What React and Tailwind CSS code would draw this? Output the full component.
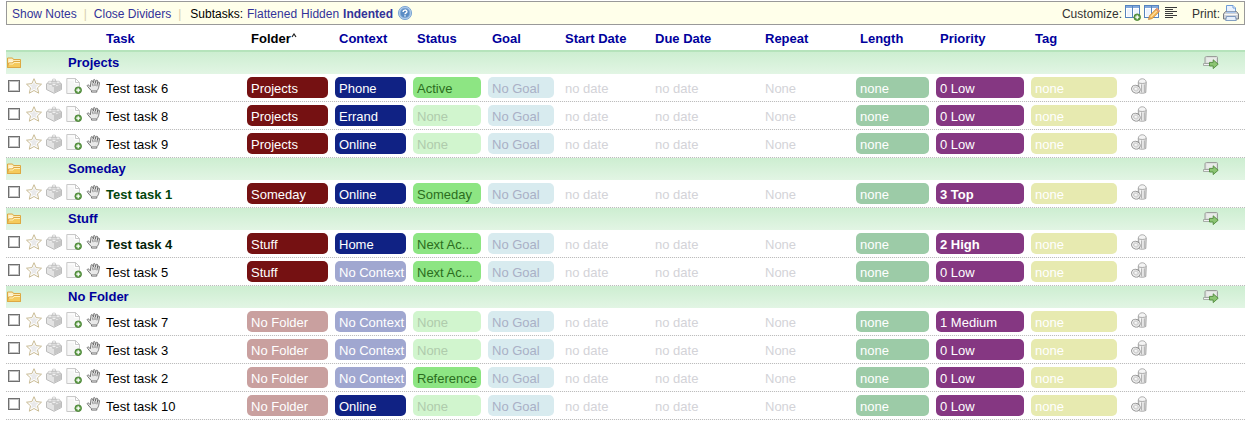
const groups = [
  {
    name: "Projects",
    tasks: [
      { title: "Test task 6", folder: "Projects", context: "Phone", status: "Active", priority: "0 Low" },
      { title: "Test task 8", folder: "Projects", context: "Errand", status: "None", priority: "0 Low" },
      { title: "Test task 9", folder: "Projects", context: "Online", status: "None", priority: "0 Low" },
    ],
  },
  {
    name: "Someday",
    tasks: [
      { title: "Test task 1", tone: "font-bold text-[#00450c]", folder: "Someday", context: "Online", status: "Someday", priority: "3 Top", high: true },
    ],
  },
  {
    name: "Stuff",
    tasks: [
      { title: "Test task 4", tone: "font-bold text-[#002208]", folder: "Stuff", context: "Home", status: "Next Ac...", priority: "2 High", high: true },
      { title: "Test task 5", folder: "Stuff", context: "No Context", status: "Next Ac...", priority: "0 Low" },
    ],
  },
  {
    name: "No Folder",
    tasks: [
      { title: "Test task 7", folder: "No Folder", context: "No Context", status: "None", priority: "1 Medium" },
      { title: "Test task 3", folder: "No Folder", context: "No Context", status: "None", priority: "0 Low" },
      { title: "Test task 2", folder: "No Folder", context: "No Context", status: "Reference", priority: "0 Low" },
      { title: "Test task 10", folder: "No Folder", context: "Online", status: "None", priority: "0 Low" },
    ],
  },
];

function Icon({ children }) {
  return (
    <svg viewBox="0 0 16 16" className="block size-4 shrink-0" fill="none" aria-hidden="true">
      {children}
    </svg>
  );
}

function PlusBadge() {
  return (
    <>
      <circle cx="12.2" cy="12.2" r="3.3" fill="#5f9c48" stroke="#44802f" strokeWidth=".8" />
      <path d="M12.2 10.2v4M10.2 12.2h4" stroke="#fff" strokeWidth="1.3" />
    </>
  );
}

function HelpIcon() {
  return (
    <Icon>
      <circle cx="8" cy="8" r="6.600" fill="#b4cfec" stroke="#7fa8d4" />
      <circle cx="8" cy="8" r="4.900" fill="#5a8cc4" stroke="#8db3dc" strokeWidth=".8" />
      <path d="M6.100 6.900c0-2.400 3.800-2.400 3.800-.2C9.900 8 8 7.900 8 9.300M8 10.200v1.400" stroke="#fff" strokeWidth="1.400" />
    </Icon>
  );
}

function ColumnsGlyph() {
  return (
    <>
      <rect x=".5" y=".5" width="14" height="12" fill="#fff" stroke="#5583bd" />
      <path d="M1 2h13" stroke="#82a9dc" strokeWidth="2" />
      <path d="M7.500 1v11" stroke="#5583bd" />
      <path d="M2 4h4.500v7.500H2zM9 4h4.500v7.500H9z" fill="#eef4fc" />
    </>
  );
}

function ColumnsAddIcon() {
  return (
    <Icon>
      <ColumnsGlyph />
      <PlusBadge />
    </Icon>
  );
}

function ColumnsEditIcon() {
  return (
    <Icon>
      <ColumnsGlyph />
      <path d="M4.500 14.500l1-3.800 6.800-6.800 2.800 2.800-6.800 6.800z" fill="#f5b653" stroke="#cc842c" strokeWidth=".8" />
      <path d="M6.800 11.800l6-6" stroke="#fde4a6" strokeWidth="1.200" />
      <path d="M11.800 4.200l1.200-1.200 2.700 2.700-1.200 1.200z" fill="#ea9f80" stroke="#c97857" strokeWidth=".5" />
      <path d="M4.500 14.500l.5-1.900 1.400 1.400z" fill="#c9a878" />
    </Icon>
  );
}

function LinesIcon() {
  return (
    <Icon>
      <path d="M2 2.500h12M2 4.500h8M2 6.500h12M2 8.500h8M2 10.500h12M2 12.500h8" stroke="#3a3a3a" />
    </Icon>
  );
}

function PrinterIcon() {
  return (
    <Icon>
      <path d="M3.500 7.500v-7h6.500l2.500 2.500v4.500z" fill="#eaf2fd" stroke="#6f9cd6" />
      <path d="M10 .5v2.500h2.500" fill="#fff" stroke="#6f9cd6" />
      <path d="M2.500 6.500h11l2 2.500v5H.5V9z" fill="#cfd2d6" stroke="#777b82" />
      <path d="M3.500 6.500h9v1.500h-9z" fill="#a8c6ee" />
      <path d="M1.500 9.500h13" stroke="#f7f7f7" />
      <path d="M3.500 11.500h9l.8 4H2.700z" fill="#e6effb" stroke="#6586b5" strokeWidth=".8" />
    </Icon>
  );
}

function FolderIcon() {
  return (
    <Icon>
      <path d="M1.500 12.500v-9.500h5l1 1.500h7v8z" fill="#fbeab7" stroke="#dda843" />
      <path d="M3 5h3.500M3 6.500h10.500" stroke="#fff8dd" />
      <path d="M1.500 12.500l1-4.500h4l1-1.500h7v6z" fill="#f5cb5d" stroke="#dda843" />
      <path d="M3.300 9h3.700l1-1.500h6" stroke="#fff0bd" />
    </Icon>
  );
}

function SendIcon() {
  return (
    <Icon>
      <path d="M2 8.500V3c0-.8.500-1.500 1.500-1.500h10c.7 0 1 .5 1 1v6z" fill="#dcdfdc" stroke="#9a9d9a" />
      <path d="M3.500 3h9.500v4H3.500z" fill="#e9ebe9" />
      <path d="M.5 8.500h8v2h-8z" fill="#f2f3f2" stroke="#989c98" strokeWidth=".8" />
      <path d="M6.500 7.400h3.700V4.800l5 4.400-5 4.400V11H6.500z" fill="#8cc573" stroke="#4f8a3b" strokeWidth=".9" />
    </Icon>
  );
}

function StarIcon() {
  return (
    <Icon>
      <path d="M8 .7l2.100 4.900 5.400.6-4 3.600 1.200 5.400L8 12.500 3.300 15.200l1.200-5.400-4-3.600 5.400-.6z" fill="#fff" stroke="#c9bb95" strokeLinejoin="round" />
      <path d="M8 3.500l1.300 3 3.300.4-2.500 2.200.8 3.300L8 10.900l-2.900 1.500.8-3.300-2.500-2.200 3.300-.4z" fill="#e9e9ea" />
    </Icon>
  );
}

function BrickIcon() {
  return (
    <Icon>
      <path d="M.5 5.800L8 2.800l7.500 3v5.700L8 15.300.5 11.500z" fill="#e3e3e3" stroke="#b4b4b4" strokeWidth=".9" strokeLinejoin="round" />
      <path d="M1 5.900L8 3.100l7 2.800-7 3.300z" fill="#f5f5f5" />
      <path d="M8 9.300v5.500l7.100-3.600V6z" fill="#c6c6c6" />
      <g stroke="#b2b2b2" strokeWidth=".6">
        <path d="M6.200 2v1.300c0 1 3.600 1 3.600 0V2M2 4.200v1.500c0 1.100 4 1.100 4 0V4.200M10 4.200v1.500c0 1.100 4 1.100 4 0V4.200M6 6.300v1.500c0 1.100 4 1.100 4 0V6.300" fill="#dadada" />
        <g fill="#fff">
          <ellipse cx="8" cy="2" rx="1.800" ry="1" />
          <ellipse cx="4" cy="4.200" rx="2" ry="1" />
          <ellipse cx="12" cy="4.200" rx="2" ry="1" />
          <ellipse cx="8" cy="6.300" rx="2" ry="1" />
        </g>
      </g>
    </Icon>
  );
}

function NoteAddIcon() {
  return (
    <Icon>
      <path d="M.8.5h8.700l4 4v11H.8z" fill="#f6f6f6" stroke="#c9c9c9" />
      <path d="M2 2h6.500v3.500H12.500" stroke="#fff" />
      <path d="M9.500.5v4h4z" fill="#fff" stroke="#c9c9c9" strokeLinejoin="round" />
      <PlusBadge />
    </Icon>
  );
}

function HandIcon() {
  return (
    <Icon>
      <path d="M4.300 8.800L3 7.300c-1-.9-2.300 0-1.500 1L3.800 11l1.700 1.800v1.300h5.300v-1.300c1.300-1.300 1.900-2.800 2.100-4.600l.6-3.300c0-1.200-1.400-1.200-1.600-.2l-.5 1.400.3-3c0-1.200-1.600-1.200-1.800-.1l-.4 1.900-.4-2.600c-.2-1.100-1.800-1-1.700.2l.1 2.600-.9-2c-.5-1-1.900-.5-1.600.6z" fill="#e9e9e9" stroke="#696969" strokeWidth=".9" strokeLinejoin="round" />
      <path d="M6.600 5.500l.5 2.700M9 5v3M11.300 5.800l-.4 2.500" stroke="#666" strokeWidth=".8" />
      <path d="M5.800 12.600h5" stroke="#999" strokeWidth=".8" />
    </Icon>
  );
}

function TrashIcon() {
  return (
    <Icon>
      <path d="M7.300 4.500l.2 10c1.500.9 5.600.9 7.300 0l.4-10z" fill="#e0e0e0" stroke="#9c9c9c" strokeWidth=".9" />
      <path d="M9.300 6v8.500M12 6v8.500" stroke="#fafafa" />
      <path d="M10.600 6.500v7.500M13.300 6.500v7.500" stroke="#a9a9a9" strokeWidth=".9" />
      <path d="M7.200 4.500C7.500-.5 15-.5 15.300 4.500c-1.500 1.300-6.600 1.300-8.100 0z" fill="#f4f4f4" stroke="#9c9c9c" strokeWidth=".8" />
      <ellipse cx="4.900" cy="11.200" rx="4.400" ry="3.800" transform="rotate(25 4.900 11.200)" fill="#f1f1f1" stroke="#8f8f8f" strokeWidth=".9" />
      <ellipse cx="4.900" cy="11" rx="2.600" ry="2" transform="rotate(25 4.900 11)" fill="#e0e0e0" stroke="#bdbdbd" strokeWidth=".6" />
      <circle cx="4.900" cy="10.800" r=".9" fill="#fff" />
    </Icon>
  );
}

function IconButton({ label, children }) {
  return (
    <button type="button" aria-label={label} className="block shrink-0 cursor-pointer">
      {children}
    </button>
  );
}

function Pill({ tone, children }) {
  return (
    <td className="pt-[3px] pr-[7px] pb-1">
      <div className={`h-[21px] overflow-hidden rounded-[5px] pl-1 leading-[23px] whitespace-nowrap ${tone}`}>{children}</div>
    </td>
  );
}

function Plain({ children }) {
  return (
    <td className="pt-[3px] pb-1 text-[#d3d3d8]">
      <div className="h-[21px] pl-1 leading-[23px]">{children}</div>
    </td>
  );
}

function TaskRow({ task }) {
  return (
    <tr className="bg-[image:repeating-linear-gradient(to_right,#bdbdbd_0px,#bdbdbd_1px,#f8f8f8_1px,#f8f8f8_2px)] bg-[length:100%_1px] bg-bottom bg-no-repeat">
      <td className="p-0">
        <div className="flex h-7 items-center">
          <div className="flex items-center gap-1 pb-1 pl-0.5">
            <input
              type="checkbox"
              aria-label={`Complete ${task.title}`}
              className="mr-0.5 block size-3 shrink-0 appearance-none border border-[#6f6f6f] bg-white inset-ring inset-ring-[#c4c4c4] checked:bg-[#858585]"
            />
            <IconButton label="Star"><StarIcon /></IconButton>
            <IconButton label="Subtasks"><BrickIcon /></IconButton>
            <IconButton label="Add note"><NoteAddIcon /></IconButton>
            <IconButton label="Move"><HandIcon /></IconButton>
          </div>
          <span className={`pt-0.5 pl-1 ${task.tone ?? "text-black"}`}>{task.title}</span>
        </div>
      </td>
      <Pill tone={task.folder === "No Folder" ? "bg-[#c9a09f] text-white" : "bg-[#751112] text-white"}>{task.folder}</Pill>
      <Pill tone={task.context === "No Context" ? "bg-[#a0a7d0] text-white" : "bg-[#102284] text-white"}>{task.context}</Pill>
      <Pill tone={task.status === "None" ? "bg-[#d1f5ce] text-[#afcbac]" : "bg-[#8de583] text-[#2b6d20]"}>{task.status}</Pill>
      <Pill tone="bg-[#d8ebef] text-[#a9b0c6]">No Goal</Pill>
      <Plain>no date</Plain>
      <Plain>no date</Plain>
      <Plain>None</Plain>
      <Pill tone="bg-[#9ccba7] text-white">none</Pill>
      <Pill tone={task.high ? "bg-[#853782] font-bold text-white" : "bg-[#853782] text-white"}>{task.priority}</Pill>
      <Pill tone="bg-[#e7eab0] text-white">none</Pill>
      <td className="p-0">
        <div className="pb-1 pl-[7px]">
          <IconButton label={`Delete ${task.title}`}><TrashIcon /></IconButton>
        </div>
      </td>
    </tr>
  );
}

function GroupRows({ group }) {
  return (
    <tbody>
      <tr className="bg-linear-to-b from-[#cdeed1] to-[#e2f5e4]">
        <th scope="rowgroup" colSpan={11} className="p-0 text-left">
          <div className="flex h-[22px] items-center">
            <IconButton label={`Collapse ${group.name}`}><FolderIcon /></IconButton>
            <a href="#" className="pl-[46px] text-[#00009c]">{group.name}</a>
          </div>
        </th>
        <td className="p-0">
          <div className="flex justify-end pr-[26px]">
            <IconButton label={`Send ${group.name}`}><SendIcon /></IconButton>
          </div>
        </td>
      </tr>
      {group.tasks.map((task) => (
        <TaskRow key={task.title} task={task} />
      ))}
    </tbody>
  );
}

const headings = ["Folder", "Context", "Status", "Goal", "Start Date", "Due Date", "Repeat", "Length", "Priority", "Tag"];

function Toolbar() {
  return (
    <div className="flex h-6 items-center border border-[#999] bg-[#ffffea] px-[5px] text-[12px] text-black">
      <div className="flex items-center gap-[7px] pt-px">
        <a href="#" className="text-[#333399]">Show Notes</a>
        <span className="text-[#d8cfb0]">|</span>
        <a href="#" className="text-[#333399]">Close Dividers</a>
        <span className="text-[#d8cfb0]">|</span>
        <div className="flex gap-1 pl-0.5">
          <span>Subtasks:</span>
          <a href="#" className="text-[#333399]">Flattened</a>
          <a href="#" className="text-[#333399]">Hidden</a>
          <a href="#" className="font-bold text-[#333399]">Indented</a>
        </div>
      </div>
      <div className="pl-1"><IconButton label="Help"><HelpIcon /></IconButton></div>
      <div className="ml-auto flex items-center gap-[3px] text-[#333]">
        <span className="pt-px">Customize:</span>
        <IconButton label="Add columns"><ColumnsAddIcon /></IconButton>
        <IconButton label="Edit columns"><ColumnsEditIcon /></IconButton>
        <IconButton label="Row lines"><LinesIcon /></IconButton>
        <span className="pt-px pl-[10px]">Print:</span>
        <IconButton label="Print"><PrinterIcon /></IconButton>
      </div>
    </div>
  );
}

export default function App() {
  return (
    <main className="bg-white pt-px pr-[5px] pl-1.5 font-['Liberation_Sans',Arial,sans-serif] text-[13px]">
      <Toolbar />
      <table className="w-full table-fixed border-separate border-spacing-0">
        <colgroup>
          <col />
          <col className="w-[88px]" />
          <col className="w-[78px]" />
          <col className="w-[75px]" />
          <col className="w-[73px]" />
          <col className="w-[90px]" />
          <col className="w-[110px]" />
          <col className="w-[95px]" />
          <col className="w-[80px]" />
          <col className="w-[95px]" />
          <col className="w-[93px]" />
          <col className="w-[121px]" />
        </colgroup>
        <thead>
          <tr className="h-[27px] text-left text-[#00009c]">
            <th scope="col" className="border-b-2 border-[#b5e3bb] pt-0.5 pb-0 pl-[100px]"><a href="#">Task</a></th>
            {headings.map((name) => (
              <th key={name} scope="col" className="border-b-2 border-[#b5e3bb] pt-0.5 pb-0 pl-1 whitespace-nowrap">
                {name === "Folder" ? (
                  <a href="#" className="flex items-center text-black">
                    Folder
                    <svg viewBox="0 0 6 12" className="h-3 w-1.5" fill="none" role="img" aria-label="sorted ascending">
                      <path d="M1 4l2-3 2 3" stroke="#222" strokeWidth="1.200" />
                    </svg>
                  </a>
                ) : (
                  <a href="#">{name}</a>
                )}
              </th>
            ))}
            <td className="border-b-2 border-[#b5e3bb] p-0" />
          </tr>
        </thead>
        {groups.map((group) => (
          <GroupRows key={group.name} group={group} />
        ))}
      </table>
    </main>
  );
}
